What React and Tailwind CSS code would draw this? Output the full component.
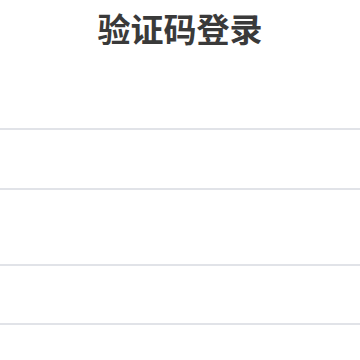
export default function App() {
  return (
    <div className="w-[360px] h-[360px] bg-white overflow-hidden" style={{ fontFamily: '"Noto Sans CJK SC", "Noto Sans", sans-serif' }}>
      <h1 className="pt-[6px] h-[56px] text-center text-[33px] leading-[44px] font-semibold text-[#3a3a3a]">验证码登录</h1>
      <div className="mt-[72px]">
        <div className="h-[62px] border-y-2 border-[#e1e3e8]" />
        <div className="mt-[74px] h-[61px] border-y-2 border-[#e1e3e8]" />
      </div>
    </div>
  )
}
